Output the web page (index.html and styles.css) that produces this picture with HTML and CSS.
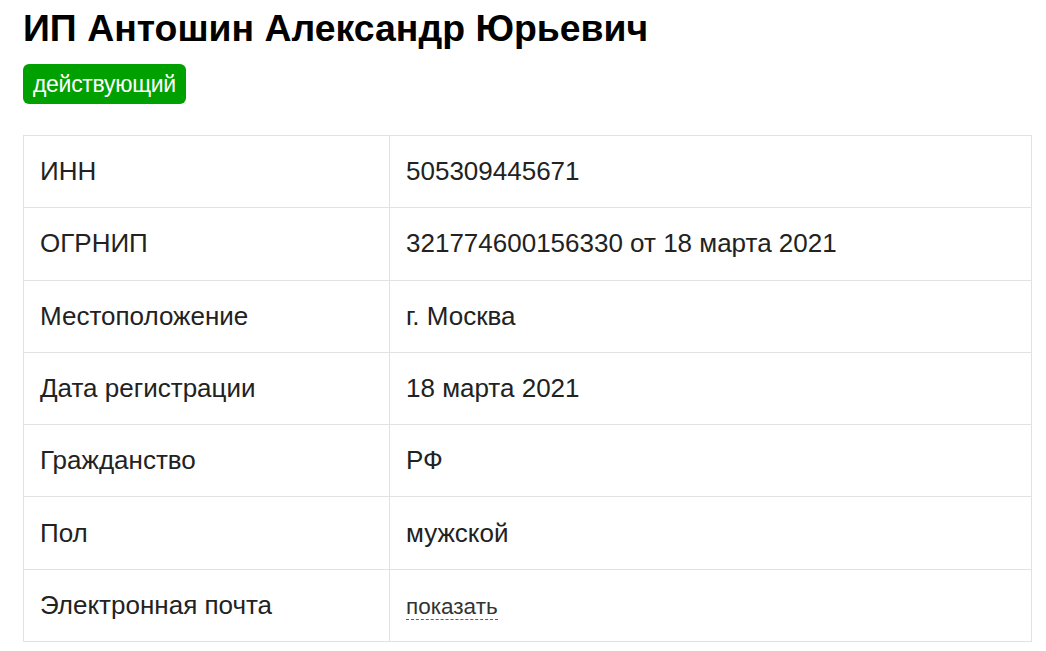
FILE: index.html
```html
<!DOCTYPE html>
<html lang="ru">
<head>
<meta charset="utf-8">
<title>ИП Антошин Александр Юрьевич</title>
<link rel="stylesheet" href="styles.css">
</head>
<body>
<div class="page">
  <h1 class="title">ИП Антошин Александр Юрьевич</h1>
  <span class="badge">действующий</span>
  <table class="info">
    <tr><td class="label">ИНН</td><td class="value">505309445671</td></tr>
    <tr><td class="label">ОГРНИП</td><td class="value">321774600156330 от 18 марта 2021</td></tr>
    <tr><td class="label">Местоположение</td><td class="value">г. Москва</td></tr>
    <tr><td class="label">Дата регистрации</td><td class="value">18 марта 2021</td></tr>
    <tr><td class="label">Гражданство</td><td class="value">РФ</td></tr>
    <tr><td class="label">Пол</td><td class="value">мужской</td></tr>
    <tr><td class="label">Электронная почта</td><td class="value"><span class="show">показать</span></td></tr>
  </table>
</div>
</body>
</html>
```
FILE: styles.css
```css
html, body {
  margin: 0;
  padding: 0;
  background: #fff;
}
body {
  font-family: "Liberation Sans", Arial, sans-serif;
  color: #222;
}
.page {
  padding: 0 14px 0 23px;
}
.title {
  margin: 0;
  padding-top: 8px;
  font-size: 37.4px;
  line-height: 40px;
  font-weight: bold;
  color: #000;
}
.badge {
  display: inline-block;
  margin-top: 16px;
  height: 40px;
  line-height: 40px;
  padding: 0 10px;
  background: #00a000;
  color: #fff;
  border-radius: 6px;
  font-size: 23px;
  letter-spacing: -0.3px;
}
.info {
  margin-top: 31px;
  width: 100%;
  border-collapse: collapse;
  font-size: 26px;
  color: #222;
}
.info td {
  border: 1px solid #e2e2e2;
  height: 71.3px;
  padding: 0 16px;
  vertical-align: middle;
}
.info .label {
  width: 333px;
}
.show {
  font-size: 22.5px;
  color: #333;
  border-bottom: 1px dashed #2a6cb0;
}
```
